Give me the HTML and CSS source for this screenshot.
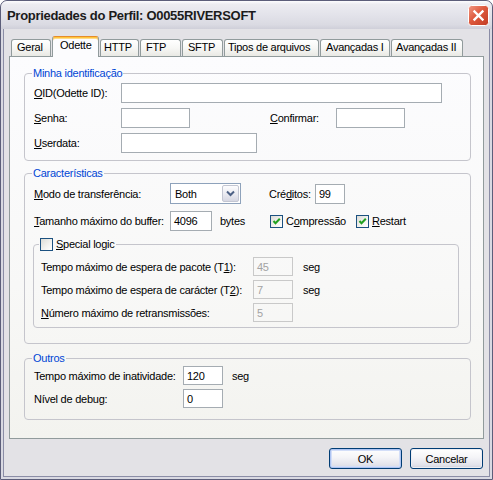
FILE: index.html
```html
<!DOCTYPE html>
<html lang="pt">
<head>
<meta charset="utf-8">
<title>Propriedades do Perfil</title>
<link rel="stylesheet" href="styles.css">
</head>
<body>
<div class="window">
  <div class="titlebar">
    <span class="title">Propriedades do Perfil: O0055RIVERSOFT</span>
    <span class="close">
      <svg width="21" height="21" viewBox="0 0 21 21">
        <defs>
          <linearGradient id="cg" x1="0" y1="0" x2="1" y2="1">
            <stop offset="0" stop-color="#f29a86"/>
            <stop offset="0.45" stop-color="#de5a3e"/>
            <stop offset="1" stop-color="#c23a22"/>
          </linearGradient>
        </defs>
        <rect x="0.5" y="0.5" width="20" height="20" rx="3" fill="url(#cg)" stroke="#ffffff"/>
        <path d="M6.5 6.5 L14.5 14.5 M14.5 6.5 L6.5 14.5" stroke="#ffffff" stroke-width="2.4" stroke-linecap="square"/>
      </svg>
    </span>
  </div>
  <div class="client">
    <div class="tabs">
      <div class="tab">Geral</div>
      <div class="tab active">Odette</div>
      <div class="tab">HTTP</div>
      <div class="tab">FTP</div>
      <div class="tab">SFTP</div>
      <div class="tab">Tipos de arquivos</div>
      <div class="tab">Avançadas I</div>
      <div class="tab">Avançadas II</div>
    </div>
    <div class="panel">
      <fieldset class="group g1">
        <legend>Minha identificação</legend>
        <div class="row">
          <span class="lbl"><u>O</u>ID(Odette ID):</span>
          <span class="field w-oid"></span>
        </div>
        <div class="row">
          <span class="lbl"><u>S</u>enha:</span>
          <span class="field w-pass"></span>
          <span class="lbl-confirm"><u>C</u>onfirmar:</span>
          <span class="field w-pass"></span>
        </div>
        <div class="row">
          <span class="lbl"><u>U</u>serdata:</span>
          <span class="field w-user"></span>
        </div>
      </fieldset>

      <fieldset class="group g2">
        <legend>Características</legend>
        <div class="row row-sel">
          <span class="lbl"><u>M</u>odo de transferência:</span>
          <span class="select">
            <span class="sel-text">Both</span>
            <span class="sel-btn">
              <svg width="15" height="17" viewBox="0 0 15 17"><path d="M4 6.5 L7.5 10 L11 6.5" fill="none" stroke="#4d6185" stroke-width="2"/></svg>
            </span>
          </span>
          <span class="lbl-cred">Cré<u>d</u>itos:</span>
          <span class="field w-cred">99</span>
        </div>
        <div class="row">
          <span class="lbl"><u>T</u>amanho máximo do buffer:</span>
          <span class="field w-buf">4096</span>
          <span class="unit-bytes">bytes</span>
          <span class="chk-item w-comp">
            <span class="cb"><svg width="11" height="11" viewBox="0 0 11 11"><path d="M2.5 5 L4.5 7.2 L8.8 2.8" fill="none" stroke="#21a121" stroke-width="2"/></svg></span>
            <span>C<u>o</u>mpressão</span>
          </span>
          <span class="chk-item">
            <span class="cb"><svg width="11" height="11" viewBox="0 0 11 11"><path d="M2.5 5 L4.5 7.2 L8.8 2.8" fill="none" stroke="#21a121" stroke-width="2"/></svg></span>
            <span><u>R</u>estart</span>
          </span>
        </div>
        <fieldset class="group sub">
          <legend class="chk-item"><span class="cb"></span><span><u>S</u>pecial logic</span></legend>
          <div class="row srow">
            <span class="lbl">Tempo máximo de espera de pacote (T<u>1</u>):</span>
            <span class="field disabled w-t">45</span>
            <span class="unit">seg</span>
          </div>
          <div class="row srow">
            <span class="lbl">Tempo máximo de espera de carácter (T<u>2</u>):</span>
            <span class="field disabled w-t">7</span>
            <span class="unit">seg</span>
          </div>
          <div class="row srow">
            <span class="lbl"><u>N</u>úmero máximo de retransmissões:</span>
            <span class="field disabled w-t">5</span>
          </div>
        </fieldset>
      </fieldset>

      <fieldset class="group g3">
        <legend>Outros</legend>
        <div class="row srow">
          <span class="lbl">Tempo máximo de inatividade:</span>
          <span class="field w-o">120</span>
          <span class="unit u3">seg</span>
        </div>
        <div class="row srow">
          <span class="lbl">Nível de debug:</span>
          <span class="field w-o">0</span>
        </div>
      </fieldset>
    </div>
    <div class="buttons">
      <span class="btn default">OK</span>
      <span class="btn">Cancelar</span>
    </div>
  </div>
</div>
</body>
</html>
```

FILE: styles.css
```css
html, body {
  margin: 0;
  padding: 0;
  background: #ffffff;
}
body {
  font-family: "Liberation Sans", Arial, sans-serif;
  font-size: 11px;
  letter-spacing: -0.25px;
  color: #000000;
}
u { text-decoration: underline; text-underline-offset: 1px; }

.window {
  width: 493px;
  height: 480px;
  box-sizing: border-box;
  border: 1px solid #5c5e7a;
  border-radius: 7px 7px 0 0;
  background: #d9d9e2;
  padding: 0 2px 2px;
  display: flex;
  flex-direction: column;
  overflow: hidden;
}

.titlebar {
  flex: none;
  height: 28px;
  margin: 0 -2px;
  padding: 0 3px 0 6px;
  display: flex;
  align-items: center;
  justify-content: space-between;
  border-radius: 6px 6px 0 0;
  background: linear-gradient(#fdfdfe 0%, #ececf1 12%, #e3e3ea 50%, #dadae2 85%, #cfcfd9 100%);
}
.title {
  font-weight: bold;
  font-size: 13px;
  color: #1b1b1b;
  letter-spacing: -0.3px;
}
.close { width: 21px; height: 21px; display: block; }
.close svg { display: block; }

.client {
  flex: 1;
  border: 1px solid #8b8da6;
  border-top: none;
  background: #e3e2e6;
  padding: 7px 5px 0 5px;
  display: flex;
  flex-direction: column;
}

/* tabs */
.tabs {
  display: flex;
  align-items: flex-end;
  gap: 1px;
  height: 21px;
  padding-left: 2px;
  position: relative;
  z-index: 2;
}
.tab {
  height: 17px;
  margin-bottom: 1px;
  box-sizing: border-box;
  border: 1px solid #919b9c;
  border-bottom: none;
  border-radius: 3px 3px 0 0;
  background: linear-gradient(#ffffff 0%, #f7f7f5 50%, #e9e9e4 100%);
  padding: 1px 0 0 5px;
  line-height: 13px;
  white-space: nowrap;
  overflow: hidden;
}
.tab:nth-child(1) { width: 40px; }
.tab:nth-child(2) { width: 47px; padding-left: 7px; }
.tab:nth-child(3) { width: 39px; padding-left: 3px; }
.tab:nth-child(4) { width: 41px; }
.tab:nth-child(5) { width: 41px; }
.tab:nth-child(6) { width: 95px; padding-left: 3px; }
.tab:nth-child(7) { width: 70px; }
.tab:nth-child(8) { width: 72px; padding-left: 4px; }
.tab.active {
  height: 21px;
  margin-bottom: 0;
  border-top: 1px solid #e68b2c;
  box-shadow: inset 0 1px 0 #ffc73c, inset 0 2px 0 #ffd98a;
  background: #fcfcfe;
  padding-top: 2px;
}

/* panel */
.panel {
  height: 383px;
  box-sizing: border-box;
  margin-top: -1px;
  border: 1px solid #919b9c;
  background: linear-gradient(#fcfcfe 0%, #f8f8f7 60%, #f3f3ef 100%);
  padding: 10px 12px 0 14px;
}

.group {
  margin: 0;
  border: 1px solid #c5c5cc;
  border-radius: 4px;
  min-inline-size: 0;
}
.group legend {
  padding: 0 1px;
  margin-left: -2px;
  line-height: 13px;
  height: 13px;
  color: #0046d5;
}

.row {
  display: flex;
  align-items: center;
  height: 20px;
  white-space: nowrap;
}
.row + .row { margin-top: 5px; }
.srow { height: 19px; }
.srow + .srow { margin-top: 4px; }

.field {
  box-sizing: border-box;
  height: 100%;
  border: 1px solid #a5acb2;
  background: #ffffff;
  padding-left: 3px;
  display: flex;
  align-items: center;
}
.field.disabled {
  border-color: #c9c9c9;
  background: transparent;
  color: #a3a3a3;
}

/* group 1 */
.g1 { padding: 3px 0 7px 9px; }
.g1 .lbl { width: 87px; }
.w-oid { width: 321px; }
.w-pass { width: 69px; }
.w-user { width: 136px; }
.lbl-confirm { margin-left: 80px; width: 66px; }

/* group 2 */
.g2 { margin-top: 6px; padding: 3px 0 15px 9px; }
.g2 .lbl { width: 136px; }
.row-sel { height: 21px; }
.row-sel + .row { margin-top: 7px; }
.select {
  box-sizing: border-box;
  width: 71px;
  height: 21px;
  border: 1px solid #8ea2bb;
  background: #ffffff;
  display: flex;
  align-items: center;
  justify-content: space-between;
  padding: 1px;
}
.sel-text { padding-left: 3px; }
.sel-btn {
  box-sizing: border-box;
  width: 17px;
  height: 17px;
  border: 1px solid #c3c6d2;
  border-radius: 2px;
  background: linear-gradient(#fdfdfe 0%, #ececf2 50%, #d6d7e2 100%);
  display: flex;
  align-items: center;
  justify-content: center;
}
.sel-btn svg { display: block; }
.lbl-cred { margin-left: 28px; width: 46px; }
.w-cred { width: 30px; height: 20px; }
.w-buf { width: 42px; }
.unit-bytes { margin-left: 8px; width: 50px; }

.chk-item {
  display: flex;
  align-items: center;
  gap: 3px;
}
.w-comp { width: 86px; }
.cb {
  box-sizing: border-box;
  width: 13px;
  height: 13px;
  border: 1px solid #1c5180;
  background: linear-gradient(135deg, #dcdcd7 0%, #f3f3f0 60%, #ffffff 100%);
  display: flex;
  align-items: center;
  justify-content: center;
}
.cb svg { display: block; }

.sub {
  margin: 7px 11px 0 -1px;
  padding: 6px 0 5px 7px;
}
.sub legend.chk-item {
  color: #000000;
  display: flex;
}
.sub .lbl { width: 212px; }
.w-t { width: 40px; }
.unit { margin-left: 10px; }

/* group 3 */
.g3 { margin-top: 8px; padding: 1px 0 11px 9px; }
.g3 .lbl { width: 149px; }
.w-o { width: 40px; }
.u3 { margin-left: 9px; }

/* buttons */
.buttons {
  display: flex;
  justify-content: flex-end;
  gap: 8px;
  margin-top: 9px;
  padding-right: 1px;
}
.btn {
  box-sizing: border-box;
  width: 73px;
  height: 21px;
  border: 1px solid #003c74;
  border-radius: 3px;
  background: linear-gradient(#ffffff 0%, #f4f4f7 45%, #e2e2ea 85%, #cfd0dc 100%);
  display: flex;
  align-items: center;
  justify-content: center;
  box-shadow: inset 0 0 0 1px #eeeef3;
}
.btn.default {
  box-shadow: inset 0 0 0 1px #aec4f2, inset 0 0 0 2px #d3def8;
}
```
